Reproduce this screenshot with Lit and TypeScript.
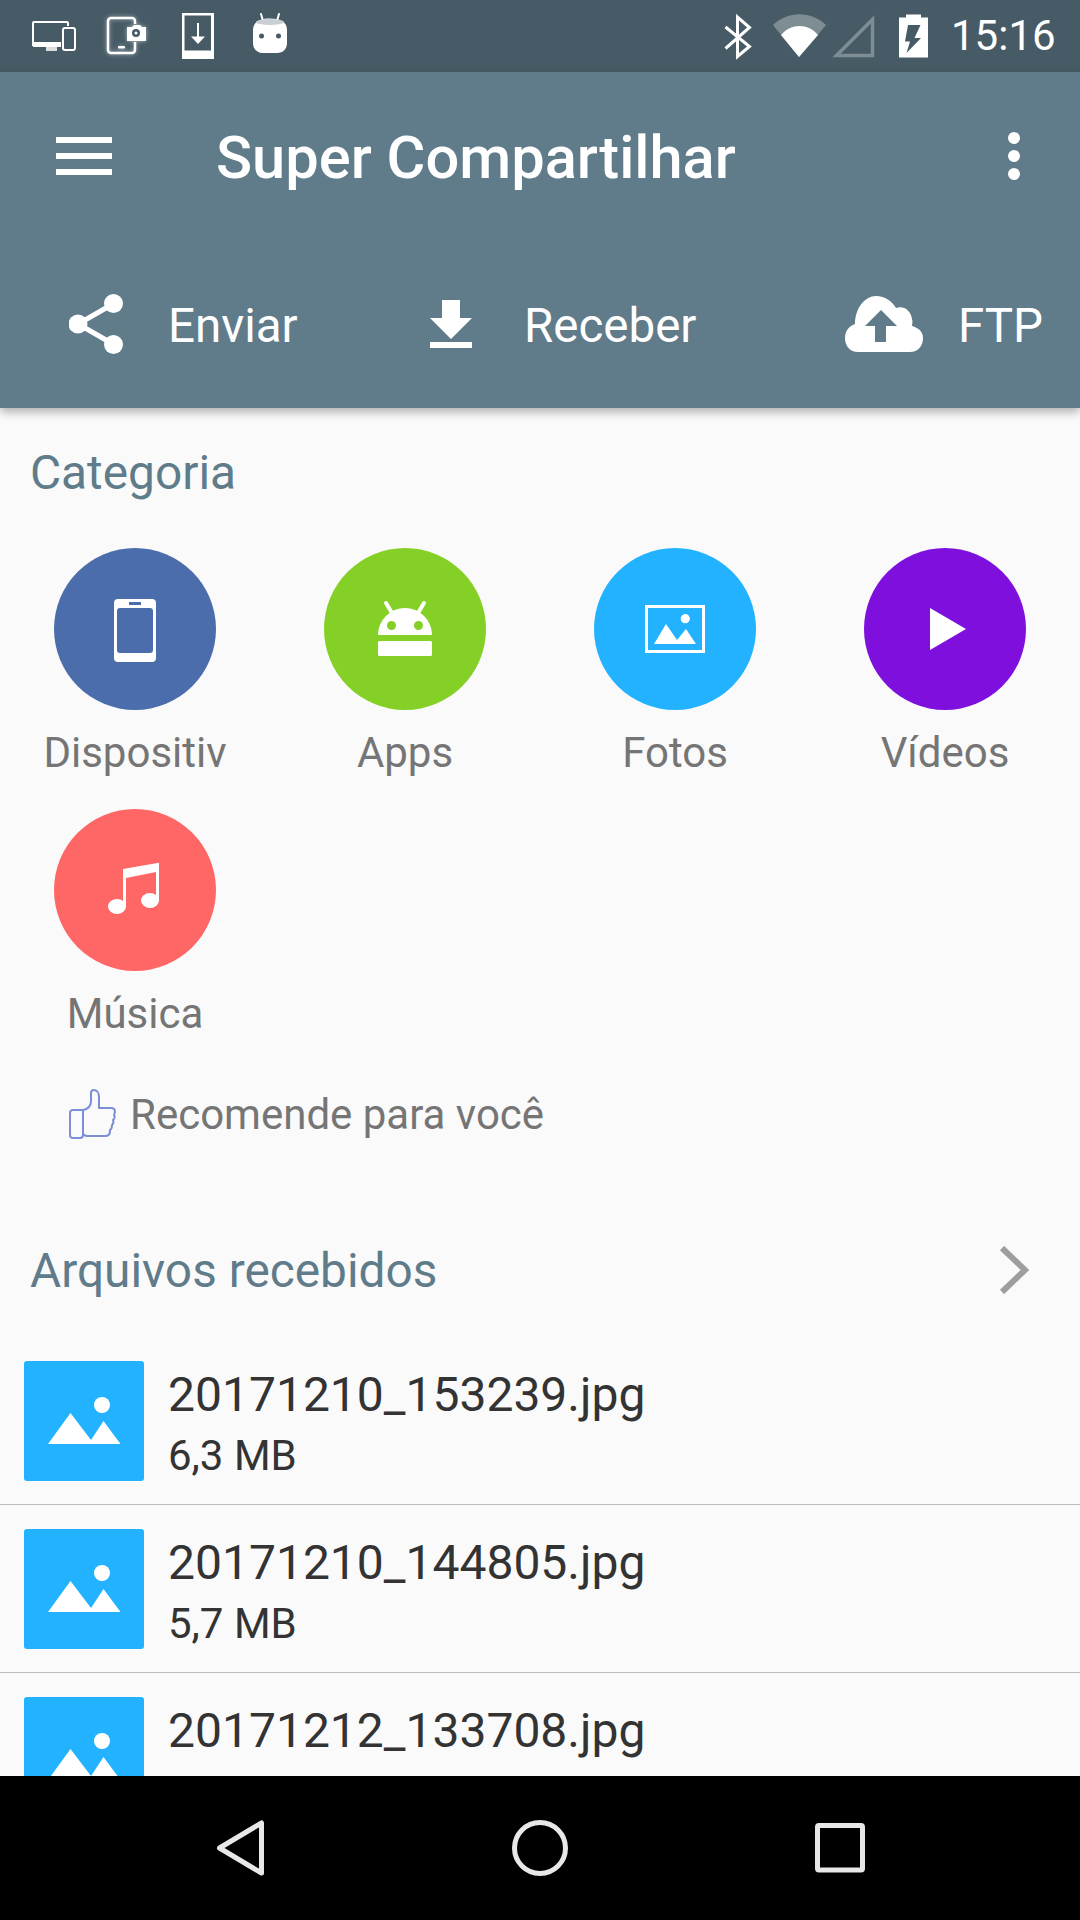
import { LitElement, html, css, svg } from "lit";
import { customElement } from "lit/decorators.js";

const categories = [
  { label: "Dispositiv", cls: "c1", icon: svg`
    <path fill-rule="evenodd" fill="#fff" d="M64 51h34a4 4 0 0 1 4 4v55a4 4 0 0 1-4 4H64a4 4 0 0 1-4-4V55a4 4 0 0 1 4-4zM66 60a3 3 0 0 0-3 3v39a3 3 0 0 0 3 3h30a3 3 0 0 0 3-3V63a3 3 0 0 0-3-3zM75 54v3h12v-3z"/>` },
  { label: "Apps", cls: "c2", icon: svg`
    <path fill="#fff" d="M54 87a27 27 0 0 1 54 0z"/>
    <rect fill="#fff" x="54" y="93" width="54" height="15" rx="1.5"/>
    <path stroke="#fff" stroke-width="4" stroke-linecap="round" d="M62 55l6 10M100 55l-6 10"/>
    <circle cx="67.5" cy="77.5" r="4.5" fill="#85d027"/><circle cx="94.5" cy="77.5" r="4.5" fill="#85d027"/>` },
  { label: "Fotos", cls: "c3", icon: svg`
    <rect x="52.5" y="58.5" width="57" height="45" fill="none" stroke="#fff" stroke-width="3"/>
    <path fill="#fff" d="M60 96l12-20 11 16 9-11 10 15z"/><circle cx="91.3" cy="70.7" r="4.6" fill="#fff"/>` },
  { label: "Vídeos", cls: "c4", icon: svg`<path fill="#fff" d="M66 60l36 21-36 21z"/>` },
  { label: "Música", cls: "c5", icon: svg`
    <path fill="#fff" d="M69 60l36-6.3V91h-3V63l-30 6v28h-3z"/>
    <ellipse cx="63" cy="97.500" rx="9" ry="7.500" fill="#fff"/><ellipse cx="96" cy="91.500" rx="9" ry="7.500" fill="#fff"/>` },
];

const files = [
  { name: "20171210_153239.jpg", size: "6,3 MB" },
  { name: "20171210_144805.jpg", size: "5,7 MB" },
  { name: "20171212_133708.jpg", size: "4,8 MB" },
];

@customElement("app-root")
export class AppRoot extends LitElement {
  static styles = css`
    :host { display: block; width: 1080px; height: 1920px; overflow: hidden; font-family: Roboto, sans-serif; background: #fafafa; }
    .screen { display: flex; flex-direction: column; width: 1080px; height: 1920px; }
    .status { flex: none; height: 72px; background: #475b66; display: flex; justify-content: space-between; align-items: center; color: #fff; }
    .status svg { display: block; height: 72px; }
    .status-left { width: 300px; }
    .status-right-icons { width: 220px; }
    .status-right { display: flex; align-items: center; }
    .glow { filter: drop-shadow(0 0 2px rgba(255,255,255,.55)); }
    .time { font-size: 42px; width: 140px; padding-left: 11px; box-sizing: border-box; line-height: 72px; }
    .appbar { flex: none; height: 336px; background: #607b8a; color: #fff; box-shadow: 0 4px 9px rgba(0,0,0,.3); position: relative; z-index: 1; }
    .toolbar { height: 168px; display: flex; align-items: center; padding: 0 60px 0 56px; }
    .menu { width: 56px; height: 38px; display: flex; flex-direction: column; justify-content: space-between; }
    .menu span { display: block; height: 6px; background: #fff; }
    .title { flex: 1; margin-left: 104px; font-size: 59.6px; font-weight: 500; padding-top: 4px; }
    .dots { display: flex; flex-direction: column; gap: 6px; }
    .dots span { display: block; width: 12px; height: 12px; border-radius: 50%; background: #fff; }
    .tabs { height: 168px; display: grid; grid-template-columns: 361px 415px 1fr; padding-left: 69px; align-items: center; font-size: 47.5px; }
    .tab { display: flex; align-items: center; }
    .tab span { padding-top: 3px; }
    .tab svg { display: block; flex: none; }
    .t1 svg { margin-right: 45px; }
    .t2 svg { margin-right: 52px; }
    .t3 svg { margin-right: 35px; }
    .content { flex: 1; min-height: 0; overflow: hidden; }
    .heading { font-size: 47.8px; line-height: 64px; color: #607b8a; margin-left: 30px; padding-top: 1px; margin-bottom: -1px; }
    .sec1 { margin-top: 32px; }
    .grid { display: grid; grid-template-columns: repeat(4, 270px); grid-auto-rows: 261px; margin-top: 44px; }
    .cat { display: flex; flex-direction: column; align-items: center; }
    .circle { width: 162px; height: 162px; border-radius: 50%; display: block; }
    .c1 { background: #4c6dab; } .c2 { background: #85d027; } .c3 { background: #22b2ff; } .c4 { background: #7e0fdd; } .c5 { background: #ff6666; }
    .cat-label { margin-top: 13px; font-size: 42px; line-height: 60px; color: #757575; }
    .recommend { display: flex; align-items: center; margin: 14px 0 0 68px; height: 60px; font-size: 42px; color: #757575; }
    .recommend svg { display: block; margin-right: 12px; }
    .files-head { display: flex; align-items: center; justify-content: space-between; margin-top: 94px; padding-right: 51px; }
    .files-head .heading { flex: 1; }
    .chevron { display: block; }
    .list { margin-top: 35px; }
    .row { display: flex; border-bottom: 1px solid #bdbdbd; padding: 24px 0 0 24px; box-sizing: content-box; height: 143px; }
    .thumb { display: block; width: 120px; height: 120px; background: #22b2ff; border-radius: 3px; flex: none; }
    .text { margin-left: 24px; color: #333; padding-top: 4px; }
    .name { font-size: 48px; line-height: 60px; }
    .size { font-size: 42px; line-height: 50px; margin-top: 6px; }
    .nav { flex: none; height: 144px; background: #000; position: relative; z-index: 2; }
    .nav svg { display: block; width: 1080px; height: 144px; }
  `;

  render() {
    return html`
      <div class="screen">
        <div class="status">
          <svg class="status-left" viewBox="0 0 300 72">
            <g fill="none" stroke="#fff" stroke-width="2">
              <path d="M68 26v-3a1 1 0 0 0-1-1H34a1 1 0 0 0-1 1v22h27"/>
              <rect x="63" y="28" width="12" height="22" rx="2"/>
            </g>
            <path fill="#fff" d="M33 42h28v5H33z"/><path fill="#ddd" d="M46 47h11v4H46z"/>
            <g class="glow">
              <path fill="none" stroke="#fff" stroke-width="2.500" d="M135 24v-3a3 3 0 0 0-3-3h-21a3 3 0 0 0-3 3v29a3 3 0 0 0 3 3h21a3 3 0 0 0 3-3V42"/>
              <rect x="118" y="46" width="7" height="2.500" rx="1" fill="#fff"/>
              <path fill="#fff" d="M127 27h5l2-2h6l2 2h4v14h-19z"/><circle cx="136" cy="33" r="4" fill="#475b66"/><circle cx="136" cy="33" r="1.500" fill="#fff"/>
            </g>
            <path fill="#fff" fill-rule="evenodd" d="M182 13h32v46h-32zM184.500 15.500v35h26.500v-35z"/>
            <path fill="#fff" d="M197 23h2v13.500h6l-7 7.500-7-7.500h6z"/>
            <path stroke="#fff" stroke-width="2" stroke-linecap="round" d="M261 14l2 7M279 14l-2 7"/>
            <path fill="#fff" d="M253 30c0-9 8-11.500 17-11.500s17 2.500 17 11.500v13c0 6-4 10-10 10h-14c-6 0-10-4-10-10z"/>
            <ellipse cx="270" cy="22" rx="14" ry="3" fill="#c9cfd2"/>
            <circle cx="261.500" cy="36" r="2.500" fill="#475b66"/><circle cx="278.500" cy="36" r="2.500" fill="#475b66"/>
          </svg>
          <div class="status-right">
            <svg class="status-right-icons" viewBox="720 0 220 72">
              <path fill="none" stroke="#fff" stroke-width="3" d="M725.500 27l24 19.500-12 10V17l12 10.500-24 21"/>
              <path fill="#fff" opacity=".3" d="M773 25c15-14.500 38-14.500 53 0l-27 32z"/>
              <path fill="#fff" d="M781 35c10-12 27-12 37 0l-19 22z"/>
              <path fill="none" stroke="#fff" stroke-opacity=".3" stroke-width="3.500" d="M872.500 19.500v36h-36z"/>
              <path fill="#fff" fill-rule="evenodd" d="M906 14.500h15v3h7v40h-29v-40h7zM908 25h12.500l-6 13h6.500l-14.500 15 3.500-11.500h-5z"/>
            </svg>
            <div class="time">15:16</div>
          </div>
        </div>

        <div class="appbar">
          <div class="toolbar">
            <div class="menu"><span></span><span></span><span></span></div>
            <div class="title">Super Compartilhar</div>
            <div class="dots"><span></span><span></span><span></span></div>
          </div>
          <div class="tabs">
            <div class="tab t1">
              <svg width="54" height="60" viewBox="69 294 54 60">
                <path fill="none" stroke="#fff" stroke-width="5" d="M113 304l-35 20 35 20"/>
                <circle cx="78" cy="324" r="9.500" fill="#fff"/><circle cx="113.500" cy="303.500" r="9.500" fill="#fff"/><circle cx="113.500" cy="344.500" r="9.500" fill="#fff"/>
              </svg>
              <span>Enviar</span>
            </div>
            <div class="tab t2">
              <svg width="42" height="48" viewBox="430 300 42 48">
                <path fill="#fff" d="M442 300h18v18h12l-21 21-21-21h12zM430 342h42v6h-42z"/>
              </svg>
              <span>Receber</span>
            </div>
            <div class="tab t3">
              <svg width="78" height="56" viewBox="845 301 78 56">
                <path fill="#fff" d="M858 357c-8 0-13-6-13-14 0-7 4-12 10-14 0-16 10-28 21-28 9 0 16 5 20 12 7-3 15 2 16 11 1 3 0 5 0 7 7 2 11 6 11 12 0 8-5 14-13 14z"/>
                <path fill="#607b8a" d="M881 315l16 16h-11v16h-11v-16h-10z"/>
              </svg>
              <span>FTP</span>
            </div>
          </div>
        </div>

        <div class="content">
          <div class="heading sec1">Categoria</div>
          <div class="grid">
            ${categories.map(c => html`
              <div class="cat">
                <svg class="circle ${c.cls}" viewBox="0 0 162 162">${c.icon}</svg>
                <div class="cat-label">${c.label}</div>
              </div>`)}
          </div>
          <div class="recommend">
            <svg width="50" height="51" viewBox="67 1087 50 51">
              <path fill="none" stroke="#7b8fd6" stroke-width="2" stroke-linejoin="round" d="M82 1108h-10a3 3 0 0 0-3 3v22a3 3 0 0 0 3 3h7a3 3 0 0 0 3-3v-25c5-1 8-4 8-9v-8c0-2 1-3 3-3 3 0 5 3 5 7v11h12c3 0 4 2 4 4l-1 3c1 1 1 4-1 5 1 2 0 4-1 5 0 2 0 4-2 5v1c0 3-2 5-5 5H86c-2 0-3-1-4-2"/>
            </svg>
            Recomende para você
          </div>
          <div class="files-head">
            <div class="heading">Arquivos recebidos</div>
            <svg class="chevron" width="30" height="48" viewBox="0 0 30 48">
              <path fill="none" stroke="#9e9e9e" stroke-width="6" d="M3 2l23 22-23 22"/>
            </svg>
          </div>
          <div class="list">
            ${files.map(f => html`
              <div class="row">
                <svg class="thumb" viewBox="0 0 120 120">
                  <path fill="#fff" d="M24 83l22.500-31 20.500 27 12.500-19 17 23z"/>
                  <ellipse cx="78" cy="44" rx="8" ry="8" fill="#fff"/>
                </svg>
                <div class="text">
                  <div class="name">${f.name}</div>
                  <div class="size">${f.size}</div>
                </div>
              </div>`)}
          </div>
        </div>

        <div class="nav">
          <svg viewBox="0 1776 1080 144">
            <g fill="none" stroke="#e8e8e8" stroke-width="5" stroke-linejoin="round">
              <path d="M261.500 1823v50l-42-25z"/>
              <circle cx="540" cy="1848" r="25.500"/>
              <rect x="817.500" y="1825.500" width="45" height="44.500" rx="1.500"/>
            </g>
          </svg>
        </div>
      </div>
    `;
  }
}
